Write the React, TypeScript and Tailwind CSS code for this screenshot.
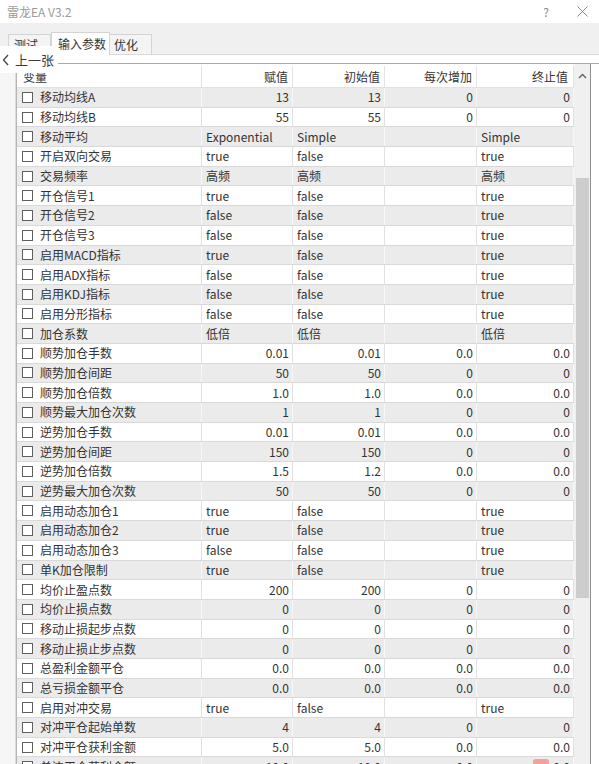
import React from 'react';

type Kind = 'n' | 't';
type Row = [string, string, string, string, string, Kind];

const ROWS: Row[] = [
  ['移动均线A', '13', '13', '0', '0', 'n'],
  ['移动均线B', '55', '55', '0', '0', 'n'],
  ['移动平均', 'Exponential', 'Simple', '', 'Simple', 't'],
  ['开启双向交易', 'true', 'false', '', 'true', 't'],
  ['交易频率', '高频', '高频', '', '高频', 't'],
  ['开仓信号1', 'true', 'false', '', 'true', 't'],
  ['开仓信号2', 'false', 'false', '', 'true', 't'],
  ['开仓信号3', 'false', 'false', '', 'true', 't'],
  ['启用MACD指标', 'true', 'false', '', 'true', 't'],
  ['启用ADX指标', 'false', 'false', '', 'true', 't'],
  ['启用KDJ指标', 'false', 'false', '', 'true', 't'],
  ['启用分形指标', 'false', 'false', '', 'true', 't'],
  ['加仓系数', '低倍', '低倍', '', '低倍', 't'],
  ['顺势加仓手数', '0.01', '0.01', '0.0', '0.0', 'n'],
  ['顺势加仓间距', '50', '50', '0', '0', 'n'],
  ['顺势加仓倍数', '1.0', '1.0', '0.0', '0.0', 'n'],
  ['顺势最大加仓次数', '1', '1', '0', '0', 'n'],
  ['逆势加仓手数', '0.01', '0.01', '0.0', '0.0', 'n'],
  ['逆势加仓间距', '150', '150', '0', '0', 'n'],
  ['逆势加仓倍数', '1.5', '1.2', '0.0', '0.0', 'n'],
  ['逆势最大加仓次数', '50', '50', '0', '0', 'n'],
  ['启用动态加仓1', 'true', 'false', '', 'true', 't'],
  ['启用动态加仓2', 'true', 'false', '', 'true', 't'],
  ['启用动态加仓3', 'false', 'false', '', 'true', 't'],
  ['单K加仓限制', 'true', 'false', '', 'true', 't'],
  ['均价止盈点数', '200', '200', '0', '0', 'n'],
  ['均价止损点数', '0', '0', '0', '0', 'n'],
  ['移动止损起步点数', '0', '0', '0', '0', 'n'],
  ['移动止损止步点数', '0', '0', '0', '0', 'n'],
  ['总盈利金额平仓', '0.0', '0.0', '0.0', '0.0', 'n'],
  ['总亏损金额平仓', '0.0', '0.0', '0.0', '0.0', 'n'],
  ['启用对冲交易', 'true', 'false', '', 'true', 't'],
  ['对冲平仓起始单数', '4', '4', '0', '0', 'n'],
  ['对冲平仓获利金额', '5.0', '5.0', '0.0', '0.0', 'n'],
  ['单边平仓获利金额', '10.0', '10.0', '0.0', '0.0', 'n'],
];

const COLS = 'grid grid-cols-[185px_91px_92px_92px_97px]';

export default function App() {
  return (
    <div className="relative w-[599px] h-[764px] overflow-hidden bg-white text-[12px] text-[#333] font-['Noto_Sans_CJK_SC','Noto_Sans',sans-serif] flex flex-col">
      {/* title bar */}
      <div className="h-[23px] shrink-0 flex items-center pl-[7px] pr-[8px]">
        <span className="text-[#9a9a9a] text-[12px]">雷龙EA V3.2</span>
        <span className="ml-auto text-[#8a8a8a] text-[12px] mr-[28px]">?</span>
        <svg width="11" height="11" viewBox="0 0 11 11" className="mr-[3px]">
          <path d="M0.5 0.5 L10.5 10.5 M10.5 0.5 L0.5 10.5" stroke="#8a8a8a" strokeWidth="1" />
        </svg>
      </div>

      {/* tab strip */}
      <div className="h-[32px] shrink-0 bg-[#f0f0f0] border-b border-[#d9d9d9] flex items-end pl-[8px]">
        <div className="h-[20px] w-[43px] border border-b-0 border-[#d4d4d4] bg-[#f4f4f4] pl-[5px] leading-[19px]">测试</div>
        <div className="h-[23px] w-[59px] border border-b-0 border-[#d4d4d4] bg-white pl-[6px] leading-[22px] -mb-px relative">输入参数</div>
        <div className="h-[20px] w-[42px] border border-b-0 border-l-0 border-[#d4d4d4] bg-[#f4f4f4] pl-[4px] leading-[19px]">优化</div>
      </div>

      {/* content */}
      <div className="flex-1 flex pt-[8px] min-h-0">
        <div className="w-[16px] shrink-0 bg-[#f6f6f6] border-r border-[#dcdcdc]" />
        <div className="flex flex-1 min-h-0 border-t border-[#a9a9a9] border-l border-l-[#b5b5b5]">
          <div className="w-[557px] shrink-0 flex flex-col">
            <div className={`${COLS} h-[24px] shrink-0 bg-white border-b border-[#e2e2e2] pt-[2px]`}>
              <div className="pl-[6px] flex items-center border-r border-[#e3e3e3]">变量</div>
              <div className="pr-[4px] flex items-center justify-end border-r border-[#e3e3e3]">赋值</div>
              <div className="pr-[4px] flex items-center justify-end border-r border-[#e3e3e3]">初始值</div>
              <div className="pr-[4px] flex items-center justify-end border-r border-[#e3e3e3]">每次增加</div>
              <div className="pr-[5px] flex items-center justify-end border-r border-[#e3e3e3]">终止值</div>
            </div>
            {ROWS.map((r, i) => {
              const gray = i % 2 === 0;
              const bg = gray ? 'bg-[#ebebeb]' : 'bg-white';
              const vline = gray ? 'border-[#f7f7f7]' : 'border-[#e1e1e1]';
              const align = r[5] === 'n' ? 'justify-end pr-[3px]' : 'justify-start pl-[4px]';
              return (
                <div key={r[0]} className={`${COLS} h-[19.7px] shrink-0 ${bg} border-b border-[#d9d9d9]`}>
                  <div className={`flex items-center pl-[5px] border-r ${vline}`}>
                    <span className="w-[11px] h-[11px] border border-[#5f5f5f] bg-white shrink-0" />
                    <span className="ml-[7px] whitespace-nowrap">{r[0]}</span>
                  </div>
                  {[r[1], r[2], r[3], r[4]].map((v, j) => (
                    <div key={j} className={`flex items-center whitespace-nowrap border-r ${vline} ${align}`}>
                      {v}
                    </div>
                  ))}
                </div>
              );
            })}
          </div>

          {/* scrollbar */}
          <div className="w-[16px] shrink-0 bg-[#f0f0f0] flex flex-col items-center">
            <div className="h-[24px] w-full flex items-center justify-center">
              <svg width="9" height="6" viewBox="0 0 9 6">
                <path d="M1 5 L4.5 1.5 L8 5" stroke="#606060" strokeWidth="1.4" fill="none" />
              </svg>
            </div>
            <div className="h-[90px]" />
            <div className="w-[13px] h-[420px] bg-[#cdcdcd]" />
          </div>
          <div className="w-[1px] shrink-0 bg-[#8e8e8e]" />
          <div className="flex-1 bg-white" />
        </div>
      </div>

      {/* previous-page overlay */}
      <div className="absolute left-0 top-[46px] w-[58px] h-[27px] bg-white flex items-center">
        <svg width="8" height="12" viewBox="0 0 8 12" className="ml-[2px]">
          <path d="M6 1 L1.5 6 L6 11" stroke="#444" strokeWidth="1.3" fill="none" />
        </svg>
        <span className="ml-[5px] text-[13px] text-[#3a3a3a]">上一张</span>
      </div>

      {/* small red mark at the bottom */}
      <div className="absolute left-[533px] top-[759px] w-[16px] h-[8px] rounded-[3px] bg-[#f2a29b]" />
    </div>
  );
}
